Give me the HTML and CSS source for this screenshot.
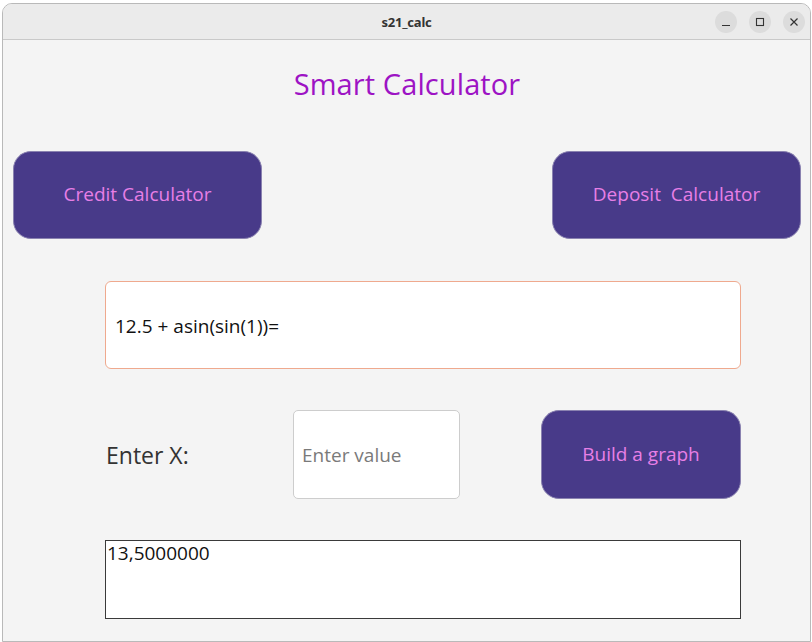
FILE: index.html
```html
<!DOCTYPE html>
<html>
<head>
<meta charset="utf-8">
<link rel="stylesheet" href="styles.css">
</head>
<body>
<div class="window">
  <div class="titlebar">
    <span class="title">s21_calc</span>
    <div class="controls">
      <span class="ctl"><svg width="10" height="10" viewBox="0 0 10 10"><path d="M1 8.5h8" stroke="#333" stroke-width="1.2"/></svg></span>
      <span class="ctl"><svg width="10" height="10" viewBox="0 0 10 10"><rect x="1.5" y="1.5" width="7" height="7" fill="none" stroke="#333" stroke-width="1.1"/></svg></span>
      <span class="ctl"><svg width="10" height="10" viewBox="0 0 10 10"><path d="M1.5 1.5l7 7M8.5 1.5l-7 7" stroke="#333" stroke-width="1.2"/></svg></span>
    </div>
  </div>
  <div class="content">
    <h1 class="heading">Smart Calculator</h1>
    <div class="top-row">
      <button class="pbtn wide">Credit Calculator</button>
      <button class="pbtn wide">Deposit&nbsp; Calculator</button>
    </div>
    <div class="main">
      <div class="expr">12.5 + asin(sin(1))=</div>
      <div class="xrow">
        <span class="xlabel">Enter X:</span>
        <div class="xfield">Enter value</div>
        <button class="pbtn graph">Build a graph</button>
      </div>
      <div class="output">13,5000000</div>
    </div>
  </div>
</div>
</body>
</html>
```
FILE: styles.css
```css
* { box-sizing: border-box; }
html, body { margin: 0; padding: 0; }
body {
  width: 812px;
  height: 642px;
  background: #ffffff;
  font-family: "Open Sans", "Noto Sans", sans-serif;
  overflow: hidden;
}
.window {
  margin: 3px 0 0 2px;
  width: 809px;
  height: 639px;
  border: 1px solid #b9b9b9;
  border-radius: 10px 10px 0 0;
  background: #f4f4f4;
  overflow: hidden;
}
.titlebar {
  height: 36px;
  background: #ebebeb;
  border-bottom: 1px solid #c9c9c9;
  display: flex;
  align-items: center;
  justify-content: center;
  position: relative;
}
.title {
  font-family: "Noto Sans", sans-serif;
  font-weight: 700;
  font-size: 13px;
  color: #333;
  letter-spacing: -0.2px;
}
.controls {
  position: absolute;
  right: 5px;
  top: 7px;
  display: flex;
  gap: 12px;
}
.ctl {
  width: 22px;
  height: 22px;
  border-radius: 50%;
  background: #dcdcdc;
  display: flex;
  align-items: center;
  justify-content: center;
}
.content {
  padding: 0 9px 0 10px;
}
.heading {
  margin: 27px 0 0 0;
  font-weight: 400;
  font-size: 29px;
  line-height: 34px;
  height: 34px;
  text-align: center;
  color: #9d13c4;
  letter-spacing: 0.1px;
}
.top-row {
  margin-top: 50px;
  display: flex;
  justify-content: space-between;
}
.pbtn {
  background: #483a89;
  border: 1px solid #8a82b0;
  border-radius: 18px;
  color: #e77fe6;
  font-family: "Open Sans", "Noto Sans", sans-serif;
  font-size: 19px;
  padding: 0;
  padding-bottom: 2px;
}
.pbtn.wide {
  width: 249px;
  height: 88px;
}
.main {
  margin-left: 92px;
  width: 636px;
}
.expr {
  margin-top: 42px;
  height: 88px;
  background: #fff;
  border: 1.5px solid #efa98e;
  border-radius: 6px;
  display: flex;
  align-items: center;
  padding-left: 9px;
  padding-top: 2px;
  font-size: 19px;
  color: #111;
}
.xrow {
  margin-top: 41px;
  height: 89px;
  display: flex;
  align-items: center;
}
.xlabel {
  width: 188px;
  padding-left: 1px;
  font-size: 23px;
  color: #333;
}
.xfield {
  width: 167px;
  height: 89px;
  background: #fff;
  border: 1px solid #cdcdcd;
  border-radius: 5px;
  display: flex;
  align-items: center;
  padding-left: 8px;
  font-size: 19px;
  color: #7a7a7a;
}
.pbtn.graph {
  margin-left: auto;
  width: 200px;
  height: 89px;
}
.output {
  margin-top: 41px;
  height: 79px;
  background: #fff;
  border: 1px solid #3a3a3a;
  padding: 0 0 0 1px;
  font-size: 19px;
  line-height: 24px;
  color: #111;
}
```
